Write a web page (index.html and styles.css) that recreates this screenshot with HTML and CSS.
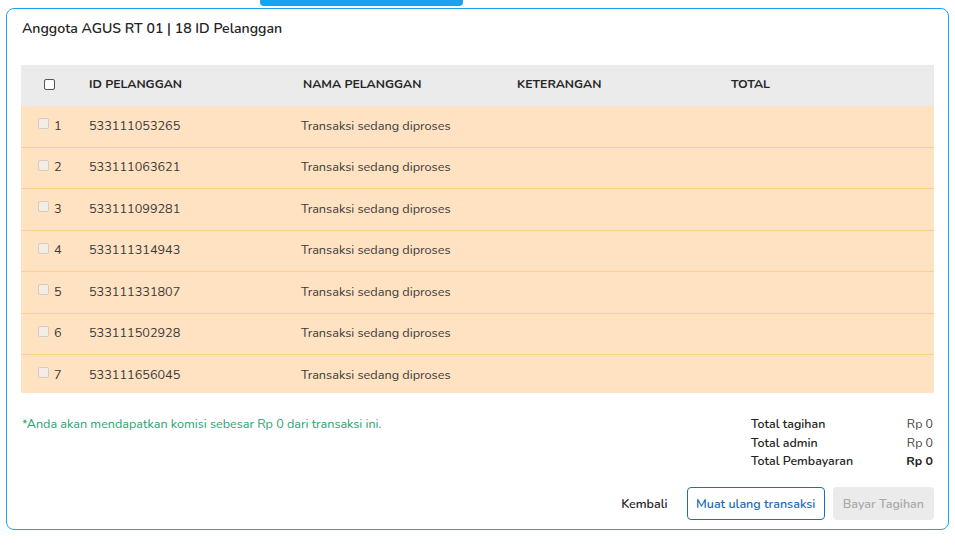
FILE: index.html
```html
<!DOCTYPE html>
<html lang="id">
<head>
<meta charset="utf-8">
<title>Anggota AGUS RT 01</title>
<link rel="stylesheet" href="styles.css">
</head>
<body>
<div class="tab"></div>
<div class="card">
  <div class="title">Anggota AGUS RT 01 | 18 ID Pelanggan</div>
  <div class="table">
    <div class="thead">
      <div class="cell chk"><span class="box"></span></div>
      <div class="cell">ID PELANGGAN</div>
      <div class="cell">NAMA PELANGGAN</div>
      <div class="cell">KETERANGAN</div>
      <div class="cell">TOTAL</div>
    </div>
    <div class="tbody">
      <div class="row"><div class="cell num"><span class="sbox"></span>1</div><div class="cell">533111053265</div><div class="cell">Transaksi sedang diproses</div><div class="cell"></div><div class="cell"></div></div>
      <div class="row"><div class="cell num"><span class="sbox"></span>2</div><div class="cell">533111063621</div><div class="cell">Transaksi sedang diproses</div><div class="cell"></div><div class="cell"></div></div>
      <div class="row"><div class="cell num"><span class="sbox"></span>3</div><div class="cell">533111099281</div><div class="cell">Transaksi sedang diproses</div><div class="cell"></div><div class="cell"></div></div>
      <div class="row"><div class="cell num"><span class="sbox"></span>4</div><div class="cell">533111314943</div><div class="cell">Transaksi sedang diproses</div><div class="cell"></div><div class="cell"></div></div>
      <div class="row"><div class="cell num"><span class="sbox"></span>5</div><div class="cell">533111331807</div><div class="cell">Transaksi sedang diproses</div><div class="cell"></div><div class="cell"></div></div>
      <div class="row"><div class="cell num"><span class="sbox"></span>6</div><div class="cell">533111502928</div><div class="cell">Transaksi sedang diproses</div><div class="cell"></div><div class="cell"></div></div>
      <div class="row"><div class="cell num"><span class="sbox"></span>7</div><div class="cell">533111656045</div><div class="cell">Transaksi sedang diproses</div><div class="cell"></div><div class="cell"></div></div>
      <div class="row"><div class="cell num"><span class="sbox"></span>8</div><div class="cell">533111700412</div><div class="cell">Transaksi sedang diproses</div><div class="cell"></div><div class="cell"></div></div>
      <div class="row"><div class="cell num"><span class="sbox"></span>9</div><div class="cell">533111758320</div><div class="cell">Transaksi sedang diproses</div><div class="cell"></div><div class="cell"></div></div>
      <div class="row"><div class="cell num"><span class="sbox"></span>10</div><div class="cell">533111802217</div><div class="cell">Transaksi sedang diproses</div><div class="cell"></div><div class="cell"></div></div>
      <div class="row"><div class="cell num"><span class="sbox"></span>11</div><div class="cell">533111845509</div><div class="cell">Transaksi sedang diproses</div><div class="cell"></div><div class="cell"></div></div>
      <div class="row"><div class="cell num"><span class="sbox"></span>12</div><div class="cell">533111901134</div><div class="cell">Transaksi sedang diproses</div><div class="cell"></div><div class="cell"></div></div>
      <div class="row"><div class="cell num"><span class="sbox"></span>13</div><div class="cell">533111952276</div><div class="cell">Transaksi sedang diproses</div><div class="cell"></div><div class="cell"></div></div>
      <div class="row"><div class="cell num"><span class="sbox"></span>14</div><div class="cell">533112004418</div><div class="cell">Transaksi sedang diproses</div><div class="cell"></div><div class="cell"></div></div>
      <div class="row"><div class="cell num"><span class="sbox"></span>15</div><div class="cell">533112058863</div><div class="cell">Transaksi sedang diproses</div><div class="cell"></div><div class="cell"></div></div>
      <div class="row"><div class="cell num"><span class="sbox"></span>16</div><div class="cell">533112103391</div><div class="cell">Transaksi sedang diproses</div><div class="cell"></div><div class="cell"></div></div>
      <div class="row"><div class="cell num"><span class="sbox"></span>17</div><div class="cell">533112157740</div><div class="cell">Transaksi sedang diproses</div><div class="cell"></div><div class="cell"></div></div>
      <div class="row"><div class="cell num"><span class="sbox"></span>18</div><div class="cell">533112209952</div><div class="cell">Transaksi sedang diproses</div><div class="cell"></div><div class="cell"></div></div>
    </div>
  </div>
  <div class="summary">
    <div class="note">*Anda akan mendapatkan komisi sebesar Rp 0 dari transaksi ini.</div>
    <div class="totals">
      <div class="lbl">Total tagihan</div><div class="val">Rp 0</div>
      <div class="lbl">Total admin</div><div class="val">Rp 0</div>
      <div class="lbl">Total Pembayaran</div><div class="val strong">Rp 0</div>
    </div>
  </div>
  <div class="actions">
    <button class="btn link">Kembali</button>
    <button class="btn outline">Muat ulang transaksi</button>
    <button class="btn disabled">Bayar Tagihan</button>
  </div>
</div>
</body>
</html>
```
FILE: styles.css
```css
* { box-sizing: border-box; }
html, body { margin: 0; padding: 0; background: #fff; }
body {
  font-family: "Nunito", "Lato", "Noto Sans", sans-serif;
  color: #2b2b2b;
  width: 955px;
  height: 546px;
  overflow: hidden;
}
.tab {
  margin-left: 260px;
  width: 203px;
  height: 6px;
  background: #19a2f0;
  border-radius: 0 0 4px 4px;
}
.card {
  margin: 2px 0 0 6px;
  width: 943px;
  height: 522px;
  border: 1px solid #1aa3f5;
  border-radius: 8px;
  padding: 10px 14px 9px 14px;
  display: flex;
  flex-direction: column;
}
.title {
  font-size: 14.1px;
  font-weight: 600;
  line-height: 20px;
  padding-left: 1px;
  color: #222;
}
.table {
  margin-top: 26px;
  width: 913px;
}
.thead {
  display: grid;
  grid-template-columns: 68px 214px 214px 214px 1fr;
  height: 41px;
  padding-bottom: 3px;
  align-items: center;
  background: #ebebeb;
  font-size: 12.3px;
  font-weight: 700;
  color: #262626;
}
.thead .chk { display: flex; justify-content: center; padding-right: 12px; }
.box {
  width: 11px; height: 11px;
  border: 1px solid #555;
  border-radius: 2px;
  background: #fff;
  display: inline-block;
}
.tbody {
  height: 287px;
  overflow-y: scroll;
  background: #ffe2c2;
}
.tbody::-webkit-scrollbar { width: 5px; }
.tbody::-webkit-scrollbar-track { background: #f7f7f7; }
.tbody::-webkit-scrollbar-thumb { background: #c8c8c8; }
.row {
  display: grid;
  grid-template-columns: 68px 212px 214px 214px 1fr;
  height: 41.5px;
  padding-bottom: 2px;
  align-items: center;
  border-bottom: 1px solid #fdd08e;
  font-size: 12.7px;
  color: #3a3a3a;
}
.row .num { display: flex; align-items: center; padding-left: 17px; }
.sbox {
  width: 11px; height: 11px;
  border: 1px solid #d6cdc2;
  border-radius: 2px;
  background: #f3ede5;
  margin-right: 5px;
  margin-top: -3px;
}
.summary {
  display: flex;
  justify-content: space-between;
  margin-top: 22px;
  padding-left: 1px;
  padding-right: 1px;
}
.note {
  font-size: 12.6px;
  color: #2aa36f;
  line-height: 18px;
}
.totals {
  display: grid;
  grid-template-columns: auto 1fr;
  width: 182px;
  font-size: 12.4px;
  line-height: 18.5px;
}
.lbl { font-weight: 600; color: #222; }
.val { text-align: right; color: #444; }
.val.strong { font-weight: 700; color: #222; }
.actions {
  margin-top: auto;
  display: flex;
  justify-content: flex-end;
  align-items: center;
  gap: 8px;
}
.btn {
  font-family: inherit;
  font-size: 12.5px;
  font-weight: 600;
  height: 33px;
  border-radius: 4px;
  padding: 0 9px;
  border: 1px solid transparent;
  background: none;
}
.btn.link { color: #222; padding: 0 10px 0 8px; }
.btn.outline { border-color: #1c6fb8; color: #1a6cb5; background: #fff; padding: 0 8.5px; }
.btn.disabled { background: #ebebeb; color: #a9a9a9; }
```
